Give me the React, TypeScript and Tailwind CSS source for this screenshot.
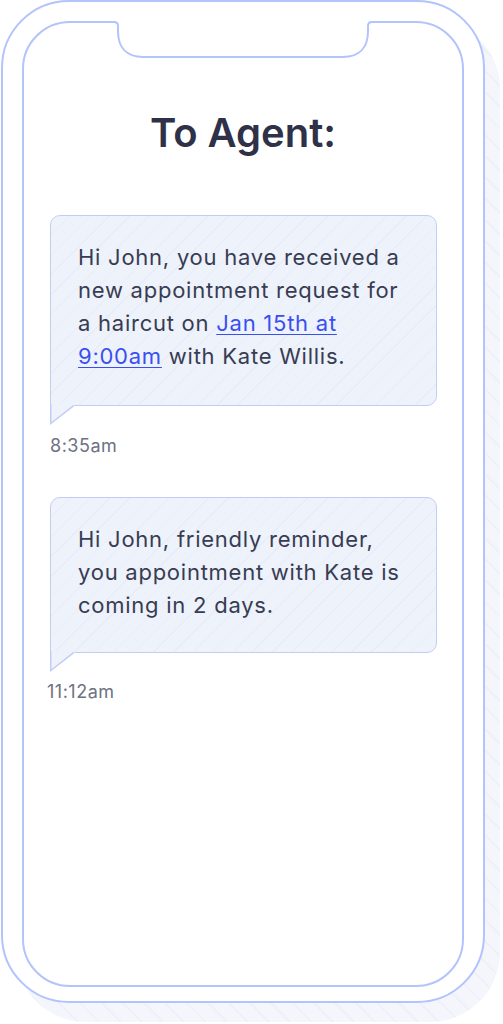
import type { ReactNode } from "react";

function Bubble({ children, className }: { children: ReactNode; className: string }) {
  return (
    <div className="relative ml-[26px] w-[387px]">
      <div
        className={`rounded-[10px] rounded-bl-none border-[1.5px] border-[#c3cdf4] bg-[repeating-linear-gradient(135deg,#eef2fb_0px,#eef2fb_13px,#e8ecf8_13px,#e8ecf8_14px)] pl-[27px] pr-[10px] pt-[25px] text-[22px] leading-[33px] tracking-[0.75px] text-[#383c52] ${className}`}
      >
        {children}
      </div>
      <svg className="absolute left-0 top-full -mt-[2px]" width="26" height="22" viewBox="0 0 26 22">
        <path d="M0,0 L25,0 L25,1.2 L0.75,19.5 Z" fill="#eef2fb" />
        <path d="M0.75,0 V19.5 L24,1.3" fill="none" stroke="#c3cdf4" strokeWidth="1.5" />
      </svg>
    </div>
  );
}

export default function App() {
  return (
    <div className="relative h-[1024px] w-[503px] overflow-hidden bg-white font-['Inter',sans-serif]">
      <div className="relative ml-[1px] w-[484px]">
        {/* striped drop shadow behind the phone */}
        <div className="absolute left-[15px] top-[19px] h-[1003px] w-[484px] rounded-[70px] bg-[repeating-linear-gradient(45deg,#f4f6fc_0px,#f4f6fc_13px,#eef1fa_13px,#eef1fa_15px)]" />

        <div className="relative h-[1003px] rounded-[68px] border-2 border-[#b3c3fb] bg-white px-[19px] pt-[19px]">
          <div className="relative h-[966px] rounded-[48px] border-2 border-[#b3c3fb] bg-white">
            {/* notch */}
            <svg className="absolute left-[88px] top-[-5px]" width="262" height="42" viewBox="0 0 262 42">
              <path
                d="M2,0 H260 V5 L256,8 V13 C256,30 247,39 231,39 H31 C15,39 6,30 6,13 V8 L2,5 Z"
                fill="#ffffff"
              />
              <path
                d="M0,4 H2 Q6,4 6,8 V13 C6,30 15,39 31,39 H231 C247,39 256,30 256,13 V8 Q256,4 260,4 H262"
                fill="none"
                stroke="#b3c3fb"
                strokeWidth="2"
              />
            </svg>

            <h1 className="mt-[86px] text-center text-[40px] font-semibold leading-[48px] text-[#2e3148]">
              To Agent:
            </h1>

            <div className="mt-[58px]">
              <Bubble className="pb-[32px]">
                Hi John, you have received a
                <br />
                new appointment request for
                <br />
                a haircut on{" "}
                <a href="#" className="text-[#3a4ff0] underline decoration-1 underline-offset-[3px]">
                  Jan 15th at
                  <br />
                  9:00am
                </a>{" "}
                with Kate Willis.
              </Bubble>
            </div>
            <p className="ml-[26px] mt-[28px] text-[18px] leading-[24px] tracking-[0.5px] text-[#6e7282]">8:35am</p>

            <div className="mt-[39px]">
              <Bubble className="pb-[30px]">
                Hi John, friendly reminder,
                <br />
                you appointment with Kate is
                <br />
                coming in 2 days.
              </Bubble>
            </div>
            <p className="ml-[23px] mt-[27px] text-[18px] leading-[24px] tracking-[0.5px] text-[#6e7282]">11:12am</p>
          </div>
        </div>
      </div>
    </div>
  );
}
